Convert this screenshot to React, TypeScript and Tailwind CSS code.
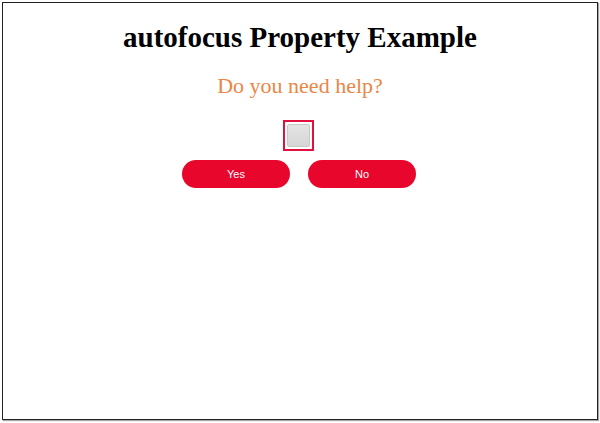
export default function App() {
  return (
    <div className="w-[600px] h-[423px] bg-white p-[2px]">
      <div className="h-[418px] border border-[#222] shadow-[1px_1px_1px_rgba(0,0,0,0.35)] flex flex-col items-center font-['Liberation_Serif',serif]">
        <h1 className="mt-[17px] text-[29px] leading-[34px] font-bold text-black">
          autofocus Property Example
        </h1>
        <p className="mt-[18px] text-[22px] leading-[28px] text-[#ea8646]">
          Do you need help?
        </p>
        <div className="mt-[20px] mr-[4px] w-[31px] h-[31px] border-2 border-[#e2103c] p-[2px] bg-white">
          <div className="w-full h-full rounded-[2px] border border-[#c8c8c8] bg-gradient-to-b from-[#e4e4e4] to-[#d6d6d6]" />
        </div>
        <div className="mt-[9px] mr-[2px] flex gap-[18px] font-['Liberation_Sans',sans-serif]">
          <button className="w-[108px] h-[28px] rounded-full bg-[#e8062c] text-white text-[11px]">
            Yes
          </button>
          <button className="w-[108px] h-[28px] rounded-full bg-[#e8062c] text-white text-[11px]">
            No
          </button>
        </div>
      </div>
    </div>
  )
}
